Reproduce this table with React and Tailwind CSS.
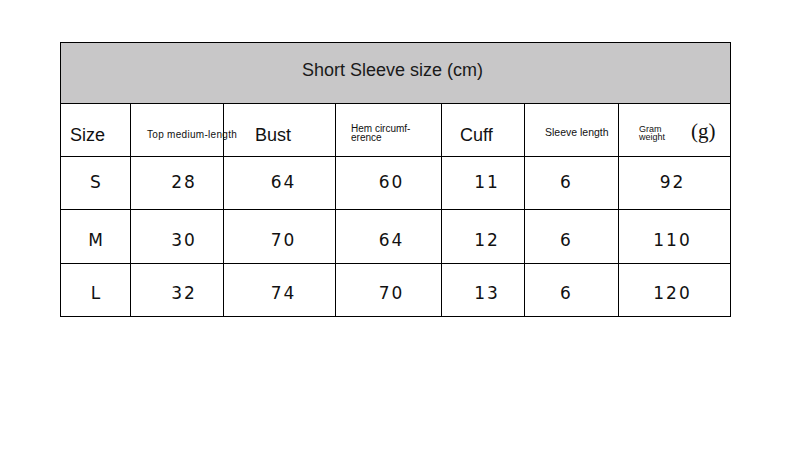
export default function App() {
  const widths = ["w-[70px]", "w-[93px]", "w-[112px]", "w-[106px]", "w-[83px]", "w-[94px]", "w-[112px]"];
  const rows = [
    ["S", "28", "64", "60", "11", "6", "92"],
    ["M", "30", "70", "64", "12", "6", "110"],
    ["L", "32", "74", "70", "13", "6", "120"],
  ];
  const offs = ["pl-[2px]", "pl-[14px]", "pl-[8px]", "pl-[6px]", "pl-[8px]", "pr-[10px]", "pr-[4px]"];
  const rowH = ["h-[53px] pt-[0px]", "h-[54px] pt-[8px]", "h-[53px] pt-[8px]"];
  const sans = { fontFamily: '"Liberation Sans", Arial, sans-serif' };
  const dv = { fontFamily: '"DejaVu Sans", sans-serif' };
  return (
    <div className="w-[800px] h-[461px] bg-white pt-[42px] pl-[60px]" style={sans}>
      <div className="w-[671px] border-l border-t border-black">
        <div className="h-[61px] border-r border-b border-black bg-[#c8c7c8] flex items-center justify-center pb-[6px] pr-[6px]">
          <span className="text-[18px] text-[#1a1a1a]">Short Sleeve size (cm)</span>
        </div>
        <div className="flex h-[53px]">
          <div className={`${widths[0]} border-r border-b border-black flex items-center pl-[9px] pt-[10px]`}>
            <span className="text-[18px] text-[#111]">Size</span>
          </div>
          <div className={`${widths[1]} border-r border-b border-black relative`}>
            <span className="text-[10px] tracking-[0.3px] text-[#111] whitespace-nowrap absolute left-[16px] top-[23px]">Top medium-length</span>
          </div>
          <div className={`${widths[2]} border-r border-b border-black flex items-center pl-[31px] pt-[10px]`}>
            <span className="text-[18px] text-[#111]">Bust</span>
          </div>
          <div className={`${widths[3]} border-r border-b border-black flex items-center pl-[15px] pt-[6px]`}>
            <span className="text-[10px] leading-[9px] text-[#111]">Hem circumf-<br />erence</span>
          </div>
          <div className={`${widths[4]} border-r border-b border-black flex items-center pl-[18px] pt-[10px]`}>
            <span className="text-[18px] text-[#111]">Cuff</span>
          </div>
          <div className={`${widths[5]} border-r border-b border-black flex items-center pl-[20px] pt-[6px]`}>
            <span className="text-[10.5px] text-[#111]">Sleeve length</span>
          </div>
          <div className={`${widths[6]} border-r border-b border-black flex items-center pl-[20px] pt-[5px]`}>
            <span className="text-[9px] leading-[8px] text-[#111]">Gram<br />weight</span>
            <span className="text-[21px] text-[#111] ml-[26px] mb-[2px]" style={{ fontFamily: '"Liberation Serif", serif' }}>(g)</span>
          </div>
        </div>
        {rows.map((r, i) => (
          <div key={i} className={`flex ${rowH[i].split(" ")[0]}`}>
            {r.map((c, j) => (
              <div key={j} className={`${widths[j]} border-r border-b border-black flex items-center justify-center ${offs[j]} ${rowH[i].split(" ")[1]}`}>
                <span className="text-[17px] tracking-[2px] text-[#111]" style={dv}>{c}</span>
              </div>
            ))}
          </div>
        ))}
      </div>
    </div>
  );
}
